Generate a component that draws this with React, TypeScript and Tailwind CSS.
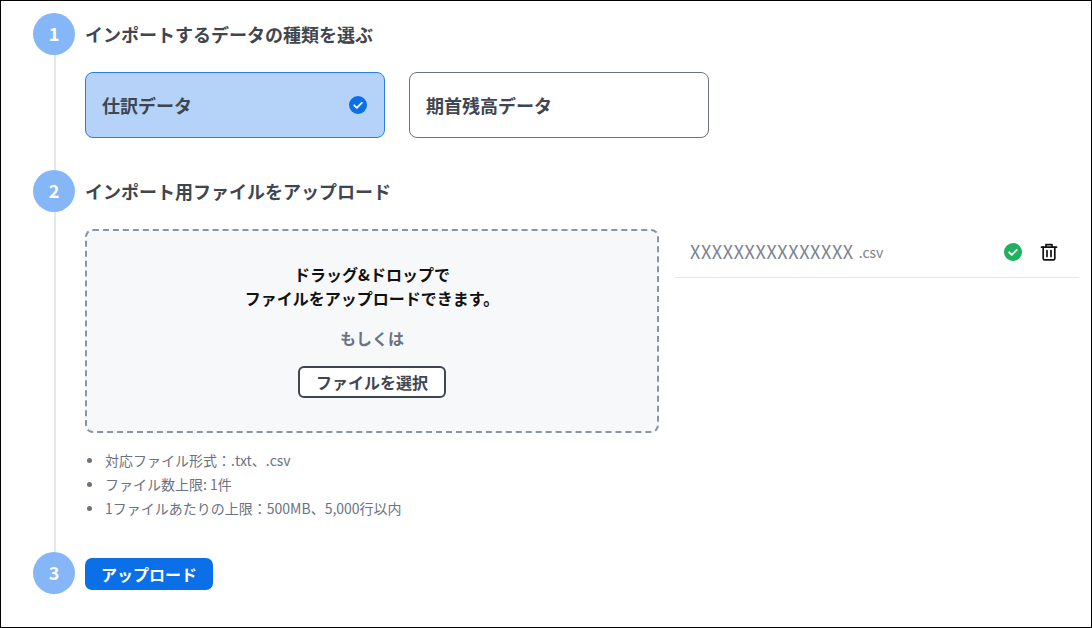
const font = { fontFamily: '"Noto Sans CJK JP", "Noto Sans", sans-serif' };

function StepBadge({ n }: { n: number }) {
  return (
    <div className="w-[42px] h-[42px] rounded-full bg-[#85b6f8] text-white flex items-center justify-center text-[18px] font-bold shrink-0 z-10 pb-[2px]">
      {n}
    </div>
  );
}

function CheckCircle({ color, className }: { color: string; className?: string }) {
  return (
    <svg width="18" height="18" viewBox="0 0 18 18" className={className}>
      <circle cx="9" cy="9" r="9" fill={color} />
      <path d="M5.2 9.3l2.6 2.5 5-5" fill="none" stroke="white" strokeWidth="1.8" strokeLinecap="round" strokeLinejoin="round" />
    </svg>
  );
}

function TrashIcon() {
  return (
    <svg width="18" height="18" viewBox="0 0 18 18" fill="none" stroke="#111" strokeWidth="1.7" strokeLinecap="round" strokeLinejoin="round">
      <path d="M1.5 4.2h15" />
      <path d="M6 4V1.6h6V4" />
      <path d="M3.2 4.2v11.2c0 .9.6 1.5 1.5 1.5h8.6c.9 0 1.5-.6 1.5-1.5V4.2" />
      <path d="M7 7.6v6M11 7.6v6" />
    </svg>
  );
}

export default function App() {
  return (
    <div style={font} className="w-[1092px] h-[628px] bg-white border border-black overflow-hidden relative">
      <div className="absolute left-[53px] top-[50px] w-[2px] h-[510px] bg-[#e5e7eb]" />

      <div className="pl-[32px] pt-[12px] flex flex-col relative">
        {/* step 1 */}
        <div className="flex items-center gap-[10px] h-[42px]">
          <StepBadge n={1} />
          <h2 className="text-[18px] font-bold text-[#3f4650]">インポートするデータの種類を選ぶ</h2>
        </div>
        <div className="flex gap-[24px] ml-[52px] mt-[17px]">
          <div className="w-[300px] h-[66px] rounded-[8px] bg-[#b5d3f8] border border-[#2a7de1] flex items-center justify-between pl-[16px] pr-[17px]">
            <span className="text-[18px] font-bold text-[#3f4650]">仕訳データ</span>
            <CheckCircle color="#0b6fe8" />
          </div>
          <div className="w-[300px] h-[66px] rounded-[8px] bg-white border border-[#6b7280] flex items-center pl-[16px]">
            <span className="text-[18px] font-bold text-[#3f4650]">期首残高データ</span>
          </div>
        </div>

        {/* step 2 */}
        <div className="flex items-center gap-[10px] h-[42px] mt-[32px]">
          <StepBadge n={2} />
          <h2 className="text-[18px] font-bold text-[#3f4650]">インポート用ファイルをアップロード</h2>
        </div>
        <div className="flex ml-[52px] mt-[17px]">
          <div className="w-[574px] h-[204px] rounded-[8px] bg-[#f7f8fa] border-2 border-dashed border-[#8a94a3] flex flex-col items-center shrink-0">
            <p className="mt-[31px] text-[16px] leading-[24px] font-bold text-[#111] text-center">
              ドラッグ&ドロップで
              <br />
              ファイルをアップロードできます。
            </p>
            <p className="mt-[16px] text-[16px] leading-[24px] font-bold text-[#6b7280]">もしくは</p>
            <button className="mt-[16px] w-[148px] h-[32px] rounded-[6px] border-2 border-[#3f4650] bg-white text-[16px] font-bold text-[#3f4650] flex items-center justify-center">
              ファイルを選択
            </button>
          </div>
          <div className="w-[404px] ml-[16px] h-[49px] border-b border-[#e5e7eb] flex items-center pl-[15px] pr-[21px] pb-[3px]">
            <span className="text-[18px] tracking-[0.6px] text-[#7b8390]">XXXXXXXXXXXXXXX</span>
            <span className="text-[14px] text-[#7b8390] ml-[5px] mt-[2px]">.csv</span>
            <CheckCircle color="#1eb25f" className="ml-auto" />
            <span className="ml-[18px] flex">
              <TrashIcon />
            </span>
          </div>
        </div>
        <ul className="ml-[52px] mt-[15px] text-[14px] leading-[24px] text-[#6b7280]">
          {["対応ファイル形式：.txt、.csv", "ファイル数上限: 1件", "1ファイルあたりの上限：500MB、5,000行以内"].map((t) => (
            <li key={t} className="flex items-center">
              <span className="w-[5px] h-[5px] rounded-full bg-[#6b7280] ml-[2px] mr-[13px]" />
              {t}
            </li>
          ))}
        </ul>

        {/* step 3 */}
        <div className="flex items-center gap-[10px] h-[42px] mt-[32px]">
          <StepBadge n={3} />
          <button className="w-[128px] h-[32px] rounded-[7px] bg-[#0b6fe8] text-white text-[16px] font-bold flex items-center justify-center mt-[1px]">
            アップロード
          </button>
        </div>
      </div>
    </div>
  );
}
